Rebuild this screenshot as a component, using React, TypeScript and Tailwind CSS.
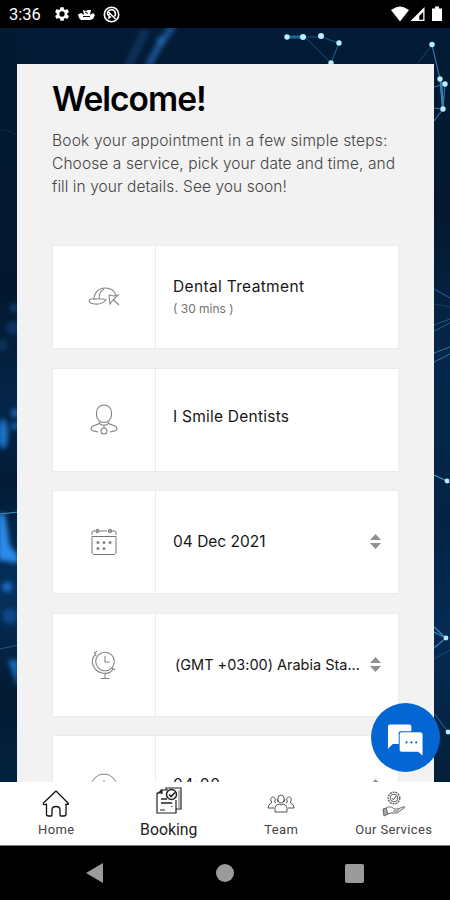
import type { ReactNode } from "react";
import clsx from "clsx";

const Backdrop = () => (
  <svg
    className="absolute inset-0 h-full w-full"
    viewBox="0 28 450 754"
    preserveAspectRatio="none"
    fill="none"
  >
    <defs>
      <linearGradient id="sea" x1="0" y1="28" x2="0" y2="782" gradientUnits="userSpaceOnUse">
        <stop offset="0" stopColor="#031b36" />
        <stop offset="0.25" stopColor="#04192f" />
        <stop offset="0.45" stopColor="#04284c" />
        <stop offset="0.65" stopColor="#032344" />
        <stop offset="0.8" stopColor="#052b55" />
        <stop offset="1" stopColor="#03203a" />
      </linearGradient>
      <linearGradient id="side" x1="0" y1="28" x2="0" y2="782" gradientUnits="userSpaceOnUse">
        <stop offset="0" stopColor="#031a30" />
        <stop offset="0.35" stopColor="#03182e" />
        <stop offset="0.5" stopColor="#04254a" />
        <stop offset="0.6" stopColor="#031b36" />
        <stop offset="0.75" stopColor="#05305c" />
        <stop offset="0.88" stopColor="#031a32" />
        <stop offset="1" stopColor="#03223f" />
      </linearGradient>
      <filter id="soft" x="-100%" y="-100%" width="300%" height="300%">
        <feGaussianBlur stdDeviation="2.8" />
      </filter>
    </defs>
    <rect y="28" width="450" height="754" fill="url(#sea)" />
    <rect y="28" width="18" height="754" fill="url(#side)" />
    {/* out of focus lights */}
    <g filter="url(#soft)">
      <path d="M173 26 160 44 148 66" stroke="#1a4f8f" strokeWidth="7" />
      <path d="m146 30-18 36" stroke="#0b2f58" strokeWidth="9" />
      <circle cx="161" cy="41" r="4" fill="#2268ac" />
      <circle cx="14" cy="308" r="4" fill="#0b3f70" />
      <circle cx="13" cy="328" r="7" fill="#0a3262" />
      <circle cx="2" cy="345" r="6" fill="#093159" />
      <ellipse cx="3" cy="434" rx="5" ry="15" fill="#1a74cb" />
      <circle cx="15" cy="413" r="4" fill="#1667b4" />
      <circle cx="15" cy="426" r="4" fill="#135b9f" />
      <path d="M-2 514h7l5 32 8 9v8l-20-3z" fill="#2b8aea" />
      <circle cx="7" cy="587" r="5" fill="#1a6dc6" />
      <circle cx="10" cy="616" r="8" fill="#0c4789" />
      <path d="m8 660 10 28v-28z" fill="#186dc0" />
    </g>
    <g stroke="#4793bd" strokeWidth="1.2">
      <path d="M0 514 18 512" />
      <path d="M0 649 18 645" stroke="#22547c" />
      <path d="M0 130q10 0 18 6" stroke="#0b2c4b" />
      <path d="M287 37h34l18 6-8 20" stroke="#185684" />
      <path d="M287 37h16" stroke="#1e6a96" strokeWidth="3" />
      <path d="m305 37 26 26" stroke="#0c3a62" />
      <path d="m432 45 8 34 3 30m2-25-2 25-9-1m9 1-9 12m0-34 11-3" stroke="#2e74a8" />
      <path d="m441 82 2 27" stroke="#3583b5" strokeWidth="2.5" />
      <path d="m432 45-14 18" stroke="#103e66" />
      <path d="m434 289 16 9" stroke="#1f528d" />
      <path d="m434 304 16 3" stroke="#123e67" />
      <path d="m434 325 16-6M434 331l16-8" strokeWidth="1" opacity=".5" />
      <path d="m434 353 16-6M434 362l16-8" strokeWidth="1" opacity=".7" />
      <path d="m434 475 13 6 3 2" />
      <path d="m434 627 12 11-12 10m0-16 12 6" stroke="#3b86b0" />
      <path d="m434 659 16-9" stroke="#174474" />
      <path d="m434 713 14 19" stroke="#265a91" />
    </g>
    <g fill="#b9edff">
      <circle cx="287" cy="37" r="2.7" />
      <circle cx="303" cy="37" r="3" />
      <circle cx="321" cy="36" r="3" />
      <circle cx="339" cy="43" r="2.7" />
      <circle cx="331" cy="63" r="2.7" />
      <circle cx="432" cy="44.5" r="2.7" />
      <circle cx="440" cy="79" r="2.7" />
      <circle cx="445" cy="84" r="2.7" />
      <circle cx="443" cy="109" r="2.7" />
      <circle cx="447" cy="481" r="2.4" />
      <circle cx="446" cy="638" r="2.4" />
      <circle cx="448" cy="732" r="2.4" />
    </g>
  </svg>
);

const StatusBar = () => (
  <header className="flex h-7 items-center justify-between bg-black pr-[7px] pl-[9px] text-white">
    <div className="flex items-center">
      <span className="mt-[3px] w-[45px] font-[Roboto] text-[16.5px] leading-none">3:36</span>
      <svg width="16" height="16" viewBox="2 2 21 20" fill="currentColor">
        <path d="M19.4 13a7.8 7.8 0 0 0 0-2l2.2-1.7-2.1-3.7-2.7 1.1-1.7-1L14.7 3h-4.3l-.5 2.7-1.7 1-2.7-1.1-2.1 3.7L5.6 11a7.8 7.8 0 0 0 0 2l-2.2 1.7 2.1 3.7 2.7-1.1 1.7 1 .5 2.7h4.3l.4-2.7 1.7-1 2.7 1.1 2.1-3.7zm-6.9 2.5a3.5 3.5 0 1 1 0-7 3.5 3.5 0 0 1 0 7z" />
      </svg>
      <svg className="ml-2" width="17" height="14" viewBox="0 0 17 14" fill="currentColor">
        <path d="M0 7.5 3 6l3 2-1-5 3 1 2-1h3l-1 5 3-2 2 2-2 4-3 1H3l-2-2z" />
        <path d="m7 5 3 1.5M5 9.500h7" stroke="#000" />
      </svg>
      <svg className="ml-2" width="17" height="17" viewBox="0 0 17 17" fill="none" stroke="currentColor">
        <circle cx="8.5" cy="8.5" r="7.2" strokeWidth="1.6" />
        <path d="M5 9.5A4 4 0 0 1 11.500 5q2 3 0 5.500M4.500 5l8 8M6 8v4l2-1.500" strokeWidth="1.5" />
      </svg>
    </div>
    <svg width="52" height="18" viewBox="0 0 52 18" fill="currentColor">
      <path d="M0 5Q9-2 18 5L9 16.5z" />
      <path fillRule="evenodd" d="M33.5 2v14h-14zm-1.300 5L28.200 11v3.700h4z" />
      <path d="M44 1.500h4v2h3V16H41V3.500h3z" />
    </svg>
  </header>
);

const ServiceIcon = () => (
  <svg width="32" height="20" viewBox="0 0 32 20" fill="none" stroke="#858585" strokeWidth="1.1">
    <path d="M6 13C6 6 10 1 17 1c6 0 10 3 10.5 7" />
    <path d="M16 2c-4 2-5 5-5 10M6 12H3c-3 1-2 4 1 4.5 6 1.5 10 1 14-3.5l-3-1H6" />
    <path d="m21 8 1 9 3-4 5-5-4 1-5-1M25.5 13l5.500 5" />
  </svg>
);

const PersonIcon = () => (
  <svg width="28" height="32" viewBox="0 0 28 32" fill="none" stroke="#808080" strokeWidth="1.1">
    <rect x="6.500" y="1" width="15" height="17.500" rx="7.500" />
    <path d="M9.5 18v1.500L3 22c-2 1-2.500 3-1 4.500L8 28M18.500 18v1.500L25 22c2 1 2.500 3 1 4.500L20 28" />
    <path d="m10 20 4 1.500 4-1.500" />
    <circle cx="14" cy="27" r="3" />
    <path d="M14 21.500V24" />
  </svg>
);

const CalendarIcon = () => (
  <svg width="26" height="28" viewBox="0 0 26 28" fill="none" stroke="#777" strokeWidth="1">
    <path d="M4 3H2c-1 0-1 1-1 2v2M9 3h7m5 0h3c1 0 1 1 1 2v2M1 8.500h24V25c0 1-1 1.500-2 1.500H3c-1 0-2-.5-2-1.500z" />
    <circle cx="6.500" cy="3" r="1.700" fill="#aaa" />
    <circle cx="19" cy="3" r="1.700" fill="#aaa" />
    <g stroke="none" fill="#888">
      <circle cx="7" cy="14.500" r="1.500" />
      <circle cx="13" cy="14.500" r="1.500" />
      <circle cx="19" cy="14.500" r="1.500" />
      <circle cx="7" cy="20.500" r="1.500" />
      <circle cx="13" cy="20.500" r="1.500" />
    </g>
  </svg>
);

const GlobeClockIcon = () => (
  <svg width="26" height="30" viewBox="0 0 26 30" fill="none" stroke="#858585" strokeWidth="1.1">
    <circle cx="14" cy="11.500" r="9.300" />
    <path d="M14 6v6h5M5 4C-2 10 2 21 11 23c5 1 9 0 11-4M6 1 3.500 3 5 5.500M21 18l3 2M14 24v4M9.500 28.500h9" />
  </svg>
);

const ClockIcon = () => (
  <svg width="28" height="28" viewBox="0 0 28 28" fill="none" stroke="#888" strokeWidth="1">
    <circle cx="14" cy="14" r="13" />
    <path d="M14 7v8h6" />
  </svg>
);

const Sorter = () => (
  <svg className="mb-px shrink-0" width="11" height="15" viewBox="0 0 11 15" fill="#919191">
    <path d="m5.500 0 5.500 6H0zM5.500 15 0 9h11z" />
  </svg>
);

type Step = {
  icon: ReactNode;
  title: string;
  titleClass: string;
  note?: string;
  sortable?: boolean;
};

const steps: Step[] = [
  {
    icon: <ServiceIcon />,
    title: "Dental Treatment",
    titleClass: "text-[15.5px] tracking-[0.34px]",
    note: "( 30 mins )",
  },
  {
    icon: <PersonIcon />,
    title: "I Smile Dentists",
    titleClass: "mb-1.5 text-[15.5px] tracking-[0.24px]",
  },
  {
    icon: <CalendarIcon />,
    title: "04 Dec 2021",
    titleClass: "text-[15.5px]",
    sortable: true,
  },
  {
    icon: <GlobeClockIcon />,
    title: "(GMT +03:00) Arabia Sta...",
    titleClass: "ml-0.5 text-[14.5px]",
    sortable: true,
  },
  {
    icon: <ClockIcon />,
    title: "04:00",
    titleClass: "mb-1 text-[15.5px] tracking-[0.8px]",
    sortable: true,
  },
];

const StepCard = ({ icon, title, titleClass, note, sortable }: Step) => (
  <div className="flex h-[104px] shrink-0 border border-[#ebebeb] bg-white">
    <div className="flex w-[103px] shrink-0 items-center justify-center border-r border-[#ececec]">
      {icon}
    </div>
    <div className="flex min-w-0 flex-1 items-center justify-between pr-[17px] pl-[17px]">
      <div className="w-[190px] whitespace-nowrap">
        <p className={clsx("leading-6 text-[#161616]", titleClass)}>
          {title.startsWith("(GMT") ? <span className="tracking-[-0.01px]">{title}</span> : title}
        </p>
        {note && <p className="text-[12px] leading-5 text-[#707070]">{note}</p>}
      </div>
      {sortable && <Sorter />}
    </div>
  </div>
);

const ChatButton = () => (
  <button className="absolute right-2.5 bottom-2.5 flex h-[69px] w-[69px] items-center justify-center rounded-full bg-[#0466d2]">
    <svg className="mt-1" width="37" height="32" viewBox="0 0 38 32" fill="#fff">
      <path d="M3 0h20q2 0 2 2v5H14q-2 0-2 2v11H6l-5 5V2q0-2 2-2z" />
      <path d="M15 8h19q2.500 0 2.500 2v22L32 28H15q-2 0-2-2V10q0-2 2-2z" />
      <g fill="#0466d2">
        <circle cx="20" cy="18.500" r="1.100" />
        <circle cx="25" cy="18.500" r="1.100" />
        <circle cx="30" cy="18.500" r="1.100" />
      </g>
    </svg>
  </button>
);

const HomeIcon = () => (
  <svg
    width="28"
    height="28"
    viewBox="0 0 28 28"
    fill="none"
    stroke="#111"
    strokeWidth="1.3"
    strokeLinejoin="round"
  >
    <path d="M14 1 1.500 13c-1 2 1 2 3 1v10q0 2 2 2H9q1 0 1-1v-5q0-3.500 4-3.500t4 3.500v5q0 1 1 1h3q2 0 2-2V14c2 1 3 0 2-1z" />
  </svg>
);

const BookingIcon = () => (
  <svg width="26" height="28" viewBox="0 0 26 28" fill="none" stroke="#222" strokeWidth="1.2">
    <path d="M10 3V1h15v21h-5M12 3H5v3H1v20h19V13M1 7l5-4v4" />
    <circle cx="15.500" cy="7.500" r="5" fill="#fff" strokeWidth="1.5" />
    <path d="m13 7.500 2 2 4-4M5 12h6M5 16h11" strokeWidth="1.6" />
    <path d="M16 19v1M4 23h5" />
    <path d="M23 3v18" stroke="#888" />
  </svg>
);

const TeamIcon = () => (
  <svg width="28" height="20" viewBox="0 0 28 20" fill="none" stroke="#555" strokeWidth="1">
    <ellipse cx="14" cy="5" rx="3.200" ry="4" />
    <path d="M8 18v-4q0-3 4-4l2 1 2-1q4 1 4 4v4zM11 8l-1-3M17 8l1-3" />
    <path d="M9 9 7.500 8C9 5 8 3 6 3S3 5 4.500 8v1Q1 10 1 14h6M19 9l1.500-1C19 5 20 3 22 3s3 2 1.500 5v1q3.500 1 3.500 5h-6" />
  </svg>
);

const ServicesIcon = () => (
  <svg width="24" height="26" viewBox="0 0 24 26" fill="none" stroke="#666" strokeWidth="1">
    <circle cx="12" cy="7" r="5.800" strokeWidth="1.4" strokeDasharray="2 .8" />
    <circle cx="12" cy="7" r="3.800" />
    <path d="m10 7 1.500 2 2.500-4M4 17c4-2 6-1 8 1h4c1 1 0 2-1 2h-4m5-2 5-2q3-1 1 1l-7 5H9l-4 1" />
    <path d="m1 18 3-1 2 6-4 2z" fill="#aaa" />
  </svg>
);

const tabs = [
  { label: "Home", icon: <HomeIcon /> },
  { label: "Booking", icon: <BookingIcon />, active: true },
  { label: "Team", icon: <TeamIcon /> },
  { label: "Our Services", icon: <ServicesIcon /> },
];

const TabBar = () => (
  <nav className="flex h-16 shrink-0 border-b border-[#777] bg-white font-[Roboto]">
    {tabs.map((tab) => (
      <button key={tab.label} className="flex flex-1 flex-col items-center">
        <span
          className={clsx("flex items-center justify-center", tab.active ? "h-[38px]" : "h-[43px]")}
        >
          {tab.icon}
        </span>
        <span
          className={clsx(
            "whitespace-nowrap",
            tab.active
              ? "text-[15.8px] leading-5 text-[#1d1d1d]"
              : "text-[13px] leading-[10px] tracking-[0.35px] text-[#444]"
          )}
        >
          {tab.label}
        </span>
      </button>
    ))}
  </nav>
);

const SystemNav = () => (
  <footer className="flex h-[54px] shrink-0 items-center justify-between bg-black px-[86px]">
    <svg width="18" height="20" viewBox="0 0 18 20" fill="#9b9b9b">
      <path d="M17 0v20L0 10z" />
    </svg>
    <div className="h-[18px] w-[18px] rounded-full bg-[#9b9b9b]" />
    <div className="h-[19px] w-[19px] rounded-[2px] bg-[#9b9b9b]" />
  </footer>
);

const App = () => (
  <div className="flex h-[900px] w-[450px] flex-col overflow-hidden bg-black font-['Inter',sans-serif]">
    <StatusBar />
    <main className="relative flex h-[754px] shrink-0 flex-col overflow-hidden">
      <Backdrop />
      <section className="relative mt-9 ml-[17px] flex min-h-0 w-[417px] flex-1 flex-col overflow-hidden bg-[#f2f2f2] px-[35px]">
        <h1 className="mt-[15px] text-[33.5px] leading-10 font-semibold tracking-[-1px] text-black">
          Welcome!
        </h1>
        <p className="mt-2.5 text-[15.5px] leading-[23px] font-light tracking-[0.1px] whitespace-nowrap text-[#444]">
          <span className="tracking-[0.19px]">Book your appointment in a few simple steps:</span>
          <br />
          Choose a service, pick your date and time, and
          <br />
          <span className="tracking-[0.06px]">fill in your details. See you soon!</span>
        </p>
        <div className="mt-[47px] flex flex-col gap-[18.5px]">
          {steps.map((step) => (
            <StepCard key={step.title} {...step} />
          ))}
        </div>
      </section>
      <ChatButton />
    </main>
    <TabBar />
    <SystemNav />
  </div>
);

export default App;
